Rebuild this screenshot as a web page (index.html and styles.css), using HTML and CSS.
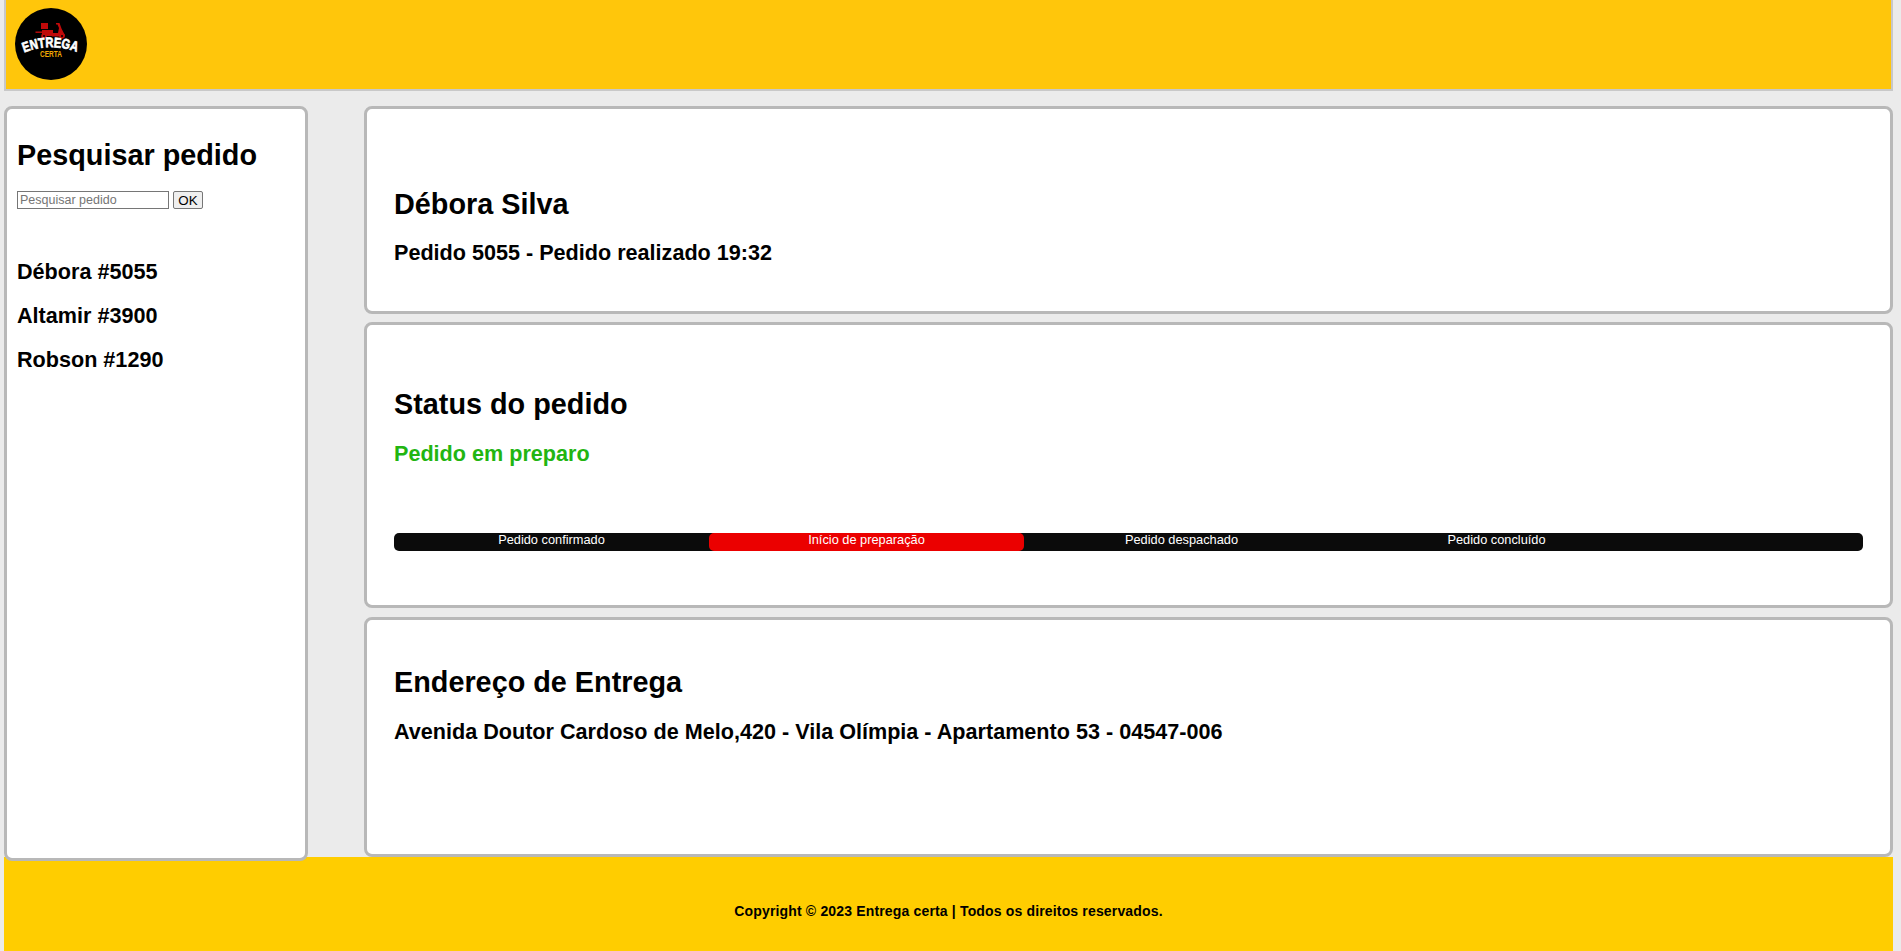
FILE: index.html
```html
<!DOCTYPE html>
<html lang="pt-BR">
<head>
<meta charset="utf-8">
<title>Entrega Certa</title>
<link rel="stylesheet" href="styles.css">
</head>
<body>
<header class="topbar">
  <svg class="logo" viewBox="0 0 72 72" role="img" aria-label="Entrega Certa">
    <circle cx="36" cy="36" r="36" fill="#000"/>
    <g fill="#c00a0a">
      <rect x="26" y="15" width="7" height="6"/>
      <rect x="27" y="22" width="11" height="6"/>
      <rect x="20.5" y="23.5" width="7" height="1.4"/>
      <path d="M37 25h6l1-5-1.500-3.500H41V15h3.500l2 5.500 2 4 1.500 2.500v1.500H37z"/>
      <circle cx="29" cy="28" r="2.800"/>
      <circle cx="47" cy="28" r="2.800"/>
    </g>
    <circle cx="29" cy="28" r="1" fill="#000"/>
    <circle cx="47" cy="28" r="1" fill="#000"/>
    <path id="arc" d="M9 44.500 Q36 34 63 44.500" fill="none"/>
    <text class="logo-main"><textPath href="#arc" textLength="54" lengthAdjust="spacingAndGlyphs">ENTREGA</textPath></text>
    <text class="logo-sub" x="36" y="49" text-anchor="middle" textLength="22" lengthAdjust="spacingAndGlyphs">CERTA</text>
  </svg>
</header>

<div class="layout">
  <aside class="sidebar">
    <h2 class="title">Pesquisar pedido</h2>
    <form class="search">
      <input class="search-input" type="text" placeholder="Pesquisar pedido">
      <button class="search-btn" type="button">OK</button>
    </form>
    <ul class="orders">
      <li>Débora #5055</li>
      <li>Altamir #3900</li>
      <li>Robson #1290</li>
    </ul>
  </aside>

  <main class="content">
    <section class="panel panel-customer">
      <h2 class="title">Débora Silva</h2>
      <h3 class="sub">Pedido 5055 - Pedido realizado 19:32</h3>
    </section>
    <section class="panel panel-status">
      <h2 class="title">Status do pedido</h2>
      <h3 class="sub sub-green">Pedido em preparo</h3>
      <ol class="steps">
        <li class="step">Pedido confirmado</li>
        <li class="step step-active">Início de preparação</li>
        <li class="step">Pedido despachado</li>
        <li class="step">Pedido concluído</li>
      </ol>
    </section>
    <section class="panel panel-address">
      <h2 class="title">Endereço de Entrega</h2>
      <h3 class="sub">Avenida Doutor Cardoso de Melo,420 - Vila Olímpia - Apartamento 53 - 04547-006</h3>
    </section>
  </main>
</div>

<footer class="footer">Copyright © 2023 Entrega certa | Todos os direitos reservados.</footer>
</body>
</html>
```
FILE: styles.css
```css
* { box-sizing: border-box; }

html, body { height: 100%; }

body {
  margin: 0;
  padding: 0 8px 0 4px;
  background: #ebebeb;
  color: #000;
  font-family: "Liberation Sans", Arial, sans-serif;
  overflow: hidden;
}

.topbar {
  height: 91px;
  padding: 8px 0 0 9px;
  background: #ffc60b;
  border: 2px solid #c8c8c8;
  border-top: 0;
}

.logo { display: block; width: 72px; height: 72px; }
.logo-main { font: 700 14px "Liberation Sans", sans-serif; fill: #fff; stroke: #fff; stroke-width: .7px; }
.logo-sub { font: 700 9.5px "Liberation Sans", sans-serif; fill: #f2a900; }

.layout {
  display: grid;
  grid-template-columns: 304px 1fr;
  column-gap: 56px;
  height: 751px;
  margin-top: 15px;
  align-items: start;
}

.sidebar, .panel {
  background: #fff;
  border: 3px solid #b8b8b8;
  border-radius: 8px;
}

.sidebar {
  position: relative;
  z-index: 1;
  height: 755px;
  padding: 29px 10px;
}

.content { display: flex; flex-direction: column; gap: 8px; }

.panel { padding: 0 27px; }
.panel-customer { height: 208px; padding-top: 78px; }
.panel-customer .sub { margin-top: 19px; }
.panel-status { height: 286px; padding-top: 62px; }
.panel-address { height: 240px; margin-top: 1px; padding-top: 45px; }

.title {
  margin: 0;
  font-size: 28.8px;
  line-height: 34px;
  font-weight: 700;
}

.sub {
  margin: 20px 0 0;
  font-size: 21.6px;
  line-height: 25px;
  font-weight: 700;
}

.sub-green { color: #22b511; }

.search { display: flex; gap: 4px; margin-top: 19px; }

.search-input {
  width: 152px;
  height: 18px;
  margin: 0;
  padding: 1px 2px;
  font: 12.5px "Liberation Sans", sans-serif;
  background: #fff;
  border: 1px solid #767676;
}

.search-btn {
  width: 30px;
  height: 18px;
  margin: 0;
  padding: 0;
  font: 13.33px "Liberation Sans", sans-serif;
  color: #000;
  background: #efefef;
  border: 1px solid #767676;
  border-radius: 2px;
}

.orders {
  margin: 50px 0 0;
  padding: 0;
  list-style: none;
  font-size: 21.6px;
  line-height: 25px;
  font-weight: 700;
}

.orders li + li { margin-top: 19px; }

.steps {
  display: flex;
  margin: 67px 0 0;
  padding: 0;
  height: 18px;
  list-style: none;
  background: #0b0b0b;
  border-radius: 5px;
}

.step {
  width: 315px;
  color: #fff;
  font-size: 12.8px;
  line-height: 14px;
  text-align: center;
}

.step-active { background: #eb0000; border-radius: 5px; }

.footer {
  height: 94px;
  padding-top: 46px;
  background: #ffcd00;
  font-size: 14px;
  line-height: 16px;
  font-weight: 700;
  letter-spacing: .16px;
  text-align: center;
}
```
